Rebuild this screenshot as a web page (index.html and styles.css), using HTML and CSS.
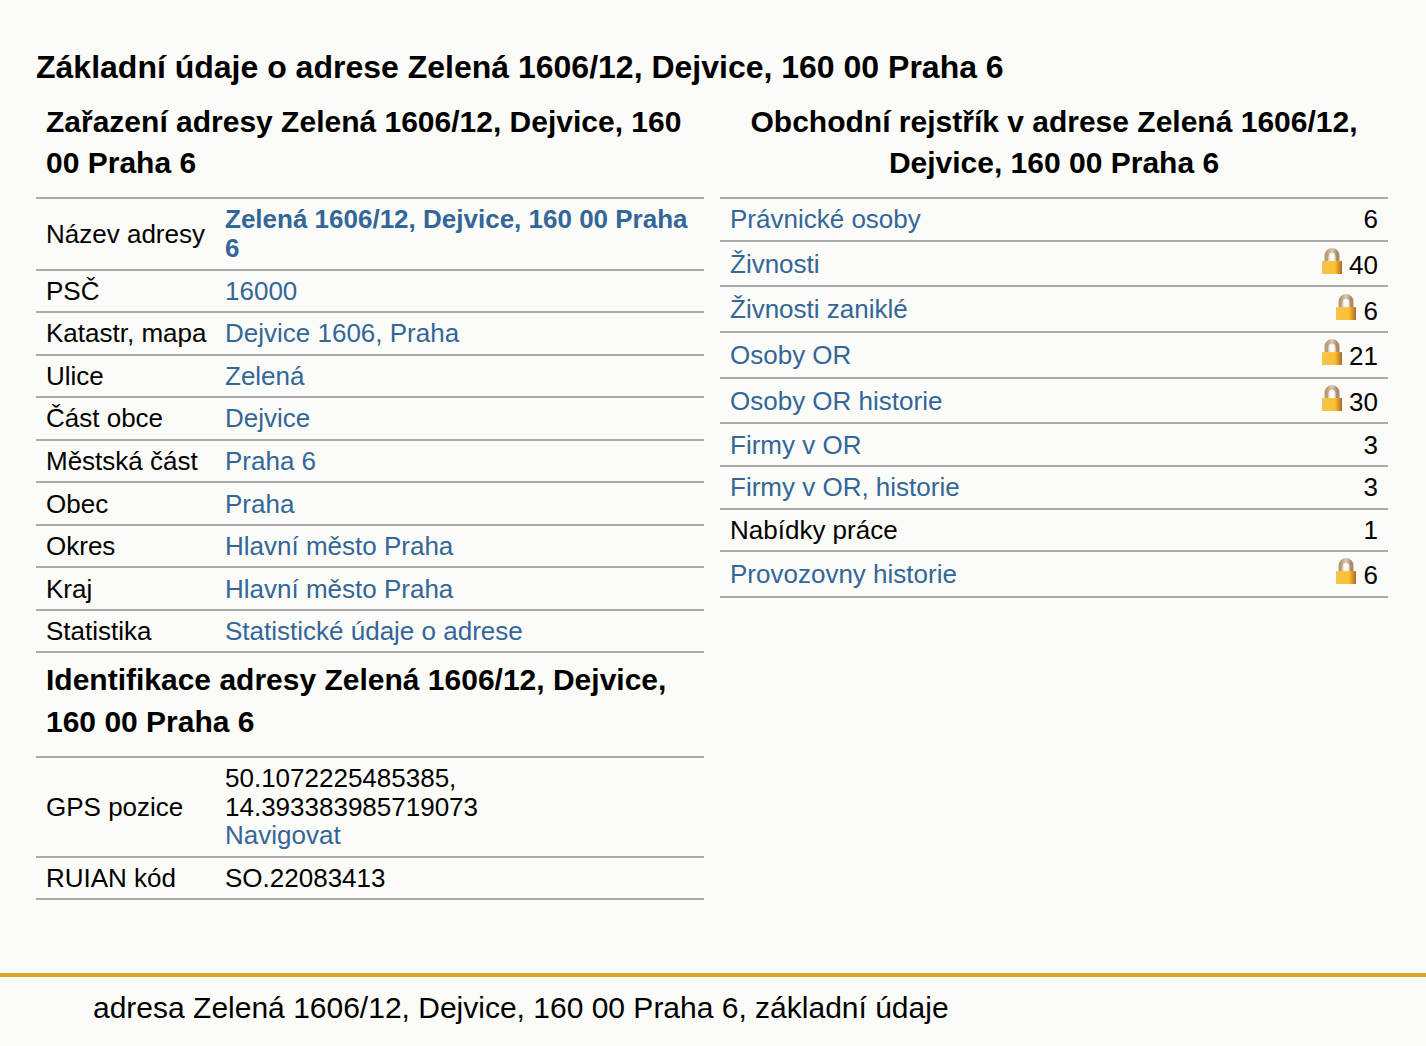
FILE: index.html
```html
<!DOCTYPE html>
<html lang="cs">
<head>
<meta charset="utf-8">
<title>Základní údaje o adrese</title>
<link rel="stylesheet" href="styles.css">
</head>
<body>
<svg class="defs" width="0" height="0" aria-hidden="true">
  <defs>
    <linearGradient id="lockBody" x1="0" x2="1" y1="0" y2="0">
      <stop offset="0" stop-color="#f3c450"/>
      <stop offset="0.65" stop-color="#fdbf30"/>
      <stop offset="0.85" stop-color="#cf8e28"/>
      <stop offset="1" stop-color="#a86c24"/>
    </linearGradient>
    <linearGradient id="lockBar" x1="0" x2="1" y1="0" y2="0">
      <stop offset="0" stop-color="#b89c78"/>
      <stop offset="0.5" stop-color="#d8cbb8"/>
      <stop offset="1" stop-color="#a88a68"/>
    </linearGradient>
    <symbol id="lock" viewBox="0 0 20 26">
      <path d="M5 13V7.5a5 5 0 0 1 10 0V13" fill="none" stroke="url(#lockBar)" stroke-width="5"/>
      <path d="M7 13V8a3 3 0 0 1 6 0v5" fill="none" stroke="#f6efe2" stroke-width="1"/>
      <rect x="0" y="13" width="20" height="13" fill="url(#lockBody)"/>
    </symbol>
  </defs>
</svg>
<main class="page">
  <h1 class="title">Základní údaje o adrese Zelená 1606/12, Dejvice, 160 00 Praha 6</h1>
  <div class="columns">
    <section class="col">
      <h2 class="sub">Zařazení adresy Zelená 1606/12, Dejvice, 160 00 Praha 6</h2>
      <table class="info">
        <tr><td class="lab">Název adresy</td><td><a href="#" class="strong">Zelená 1606/12, Dejvice, 160 00 Praha 6</a></td></tr>
        <tr><td class="lab">PSČ</td><td><a href="#">16000</a></td></tr>
        <tr><td class="lab">Katastr, mapa</td><td><a href="#">Dejvice 1606, Praha</a></td></tr>
        <tr><td class="lab">Ulice</td><td><a href="#">Zelená</a></td></tr>
        <tr><td class="lab">Část obce</td><td><a href="#">Dejvice</a></td></tr>
        <tr><td class="lab">Městská část</td><td><a href="#">Praha 6</a></td></tr>
        <tr><td class="lab">Obec</td><td><a href="#">Praha</a></td></tr>
        <tr><td class="lab">Okres</td><td><a href="#">Hlavní město Praha</a></td></tr>
        <tr><td class="lab">Kraj</td><td><a href="#">Hlavní město Praha</a></td></tr>
        <tr><td class="lab">Statistika</td><td><a href="#">Statistické údaje o adrese</a></td></tr>
      </table>
      <h2 class="sub">Identifikace adresy Zelená 1606/12, Dejvice, 160 00 Praha 6</h2>
      <table class="info">
        <tr><td class="lab">GPS pozice</td><td>50.1072225485385,<br>14.393383985719073<br><a href="#">Navigovat</a></td></tr>
        <tr><td class="lab">RUIAN kód</td><td>SO.22083413</td></tr>
      </table>
    </section>
    <section class="col">
      <h2 class="sub center">Obchodní rejstřík v adrese Zelená 1606/12, Dejvice, 160 00 Praha 6</h2>
      <table class="info stats">
        <tr><td><a href="#">Právnické osoby</a></td><td class="num">6</td></tr>
        <tr><td><a href="#">Živnosti</a></td><td class="num"><svg class="lock"><use href="#lock"/></svg> 40</td></tr>
        <tr><td><a href="#">Živnosti zaniklé</a></td><td class="num"><svg class="lock"><use href="#lock"/></svg> 6</td></tr>
        <tr><td><a href="#">Osoby OR</a></td><td class="num"><svg class="lock"><use href="#lock"/></svg> 21</td></tr>
        <tr><td><a href="#">Osoby OR historie</a></td><td class="num"><svg class="lock"><use href="#lock"/></svg> 30</td></tr>
        <tr><td><a href="#">Firmy v OR</a></td><td class="num">3</td></tr>
        <tr><td><a href="#">Firmy v OR, historie</a></td><td class="num">3</td></tr>
        <tr><td>Nabídky práce</td><td class="num">1</td></tr>
        <tr><td><a href="#">Provozovny historie</a></td><td class="num"><svg class="lock"><use href="#lock"/></svg> 6</td></tr>
      </table>
    </section>
  </div>
</main>
<footer class="foot">adresa Zelená 1606/12, Dejvice, 160 00 Praha 6, základní údaje</footer>
</body>
</html>
```
FILE: styles.css
```css
html, body { margin: 0; padding: 0; }
body {
  background: #fbfbf7;
  color: #000;
  font-family: "Liberation Sans", Arial, sans-serif;
  font-size: 26px;
  line-height: 28.8px;
  height: 1046px;
  overflow: hidden;
}
.defs { position: absolute; }
.page { padding: 49px 38px 0 36px; }
.title { margin: 0; font-size: 32px; line-height: 37px; font-weight: bold; }
.columns { display: grid; grid-template-columns: 668px 668px; column-gap: 16px; margin-top: 9px; }
.sub { margin: 0; padding: 5.7px 10px 12.9px; font-size: 30px; line-height: 41.8px; font-weight: bold; }
.sub.center { text-align: center; }
.info { border-collapse: collapse; width: 100%; table-layout: fixed; border-top: 2px solid #aaa; }
.info td { padding: 6.25px 10px 5.5px; border-bottom: 2px solid #aaa; vertical-align: middle; }
.info td.lab { width: 169px; padding-right: 0; white-space: nowrap; }
.info a { color: #336699; text-decoration: none; }
.info a.strong { font-weight: bold; }
.num { text-align: right; white-space: nowrap; }
.lock { width: 20px; height: 26.15px; vertical-align: baseline; }
.foot { border-top: 4px solid #daa520; padding: 14px 0 0 93px; font-size: 30px; line-height: 34px; margin-top: 73px; }
```
